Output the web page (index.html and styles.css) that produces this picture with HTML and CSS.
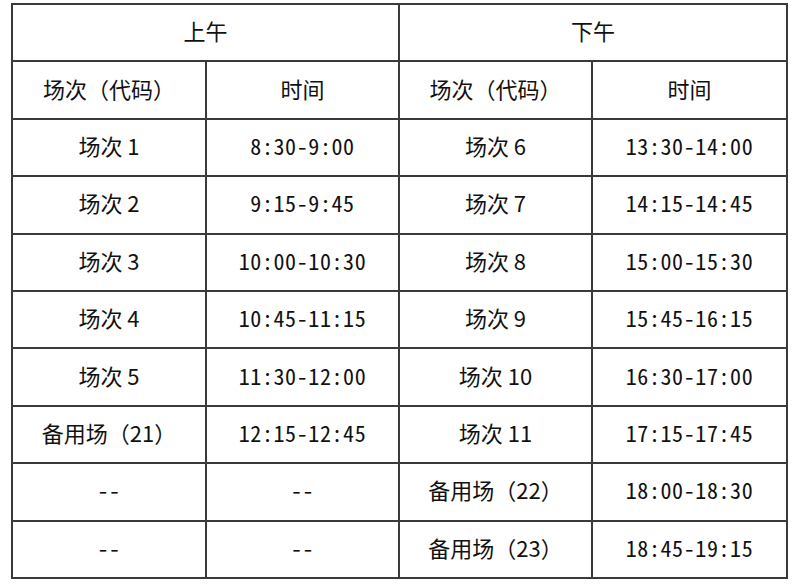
FILE: index.html
```html
<!DOCTYPE html>
<html lang="zh">
<head>
<meta charset="utf-8">
<link rel="stylesheet" href="styles.css">
</head>
<body>
<table class="schedule">
  <colgroup>
    <col class="c1"><col class="c2"><col class="c3"><col class="c4">
  </colgroup>
  <tr class="head"><td colspan="2">上午</td><td colspan="2">下午</td></tr>
  <tr><td>场次（代码）</td><td>时间</td><td>场次（代码）</td><td>时间</td></tr>
  <tr><td>场次 1</td><td class="t">8:30-9:00</td><td>场次 6</td><td class="t">13:30-14:00</td></tr>
  <tr><td>场次 2</td><td class="t">9:15-9:45</td><td>场次 7</td><td class="t">14:15-14:45</td></tr>
  <tr><td>场次 3</td><td class="t">10:00-10:30</td><td>场次 8</td><td class="t">15:00-15:30</td></tr>
  <tr><td>场次 4</td><td class="t">10:45-11:15</td><td>场次 9</td><td class="t">15:45-16:15</td></tr>
  <tr><td>场次 5</td><td class="t">11:30-12:00</td><td>场次 10</td><td class="t">16:30-17:00</td></tr>
  <tr><td>备用场（21）</td><td class="t">12:15-12:45</td><td>场次 11</td><td class="t">17:15-17:45</td></tr>
  <tr><td class="t">--</td><td class="t">--</td><td>备用场（22）</td><td class="t">18:00-18:30</td></tr>
  <tr><td class="t">--</td><td class="t">--</td><td>备用场（23）</td><td class="t">18:45-19:15</td></tr>
</table>
</body>
</html>
```
FILE: styles.css
```css
html, body {
  margin: 0;
  padding: 0;
  background: #fff;
}
body {
  font-family: "Noto Sans CJK SC", "Noto Sans", sans-serif;
  color: #111;
}
.schedule {
  margin: 3px 0 0 11px;
  border-collapse: collapse;
  table-layout: fixed;
  width: 775px;
}
.c1 { width: 194px; }
.c2 { width: 193px; }
.c3 { width: 193px; }
.c4 { width: 195px; }
.schedule tr {
  height: 57.4px;
}
.schedule td {
  border: 2px solid #3a3a3a;
  padding: 0 0 5px 0;
  text-align: center;
  vertical-align: middle;
  font-size: 22px;
  line-height: 1;
}
.schedule td.t {
  font-feature-settings: "hwid" 1;
  letter-spacing: 0.6px;
}
```
